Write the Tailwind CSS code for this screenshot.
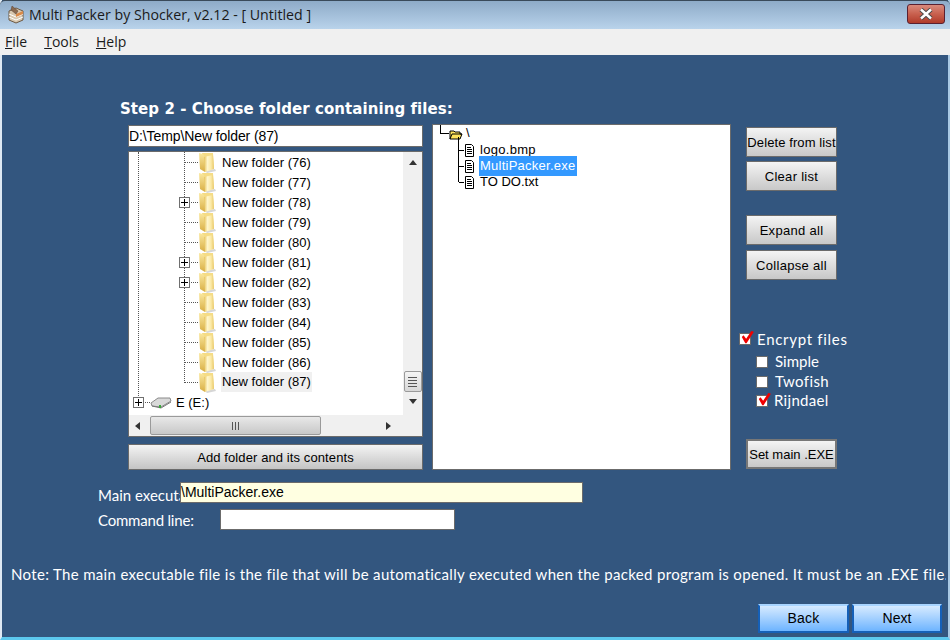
<!DOCTYPE html>
<html lang="en">
<head>
  <meta charset="UTF-8">
  <title>Multi Packer by Shocker</title>
  <script src="https://cdn.jsdelivr.net/npm/@tailwindcss/browser@4"></script>
</head>
<body class="w-[950px] h-[640px] overflow-hidden bg-[#33567f] font-['Liberation_Sans',sans-serif] text-[13px] text-black">
<svg class="absolute w-0 h-0" width="0" height="0">
  <defs>
    <linearGradient id="fold" x1="0" y1="0" x2="1" y2="0"><stop offset="0" stop-color="#e6c25a"/><stop offset="0.35" stop-color="#fff6cc"/><stop offset="0.7" stop-color="#fbe9a6"/><stop offset="1" stop-color="#e8c868"/></linearGradient>
    <linearGradient id="back" x1="0" y1="0" x2="0" y2="1"><stop offset="0" stop-color="#fbe9a0"/><stop offset="1" stop-color="#d8ae44"/></linearGradient>
    <symbol id="folder" viewBox="0 0 18 21">
      <path d="M7 19 L17 17 L18 19 L9 21 Z" fill="#d6d6d6"/>
      <path d="M4 1 L15 1 L16 16 L6 18 Z" fill="#f5dc86"/>
      <path d="M1 1 L5 2 L7 5 L7 20 L2 17 Z" fill="url(#back)"/>
      <path d="M6 5 L15 3 L16 17 L7 20 Z" fill="url(#fold)"/>
    </symbol>
    <symbol id="plus" viewBox="0 0 11 11">
      <rect x="0.5" y="0.5" width="10" height="10" fill="#fff" stroke="#6f6f6f"/>
      <path d="M2 5.5 H9 M5.5 2 V9" stroke="#000"/>
    </symbol>
    <symbol id="file" viewBox="0 0 11 13">
      <path d="M1.5 0.5 H7.5 L9.5 2.5 V12.5 H1.5 Z" fill="#fff" stroke="#000"/>
      <path d="M3 3.5 H7 M3 5.5 H8 M3 7.5 H8 M3 9.5 H8" stroke="#000"/>
    </symbol>
    <symbol id="check" viewBox="0 0 16 15">
      <path d="M2 7 L4 5 L7 9 L13 0 L16 1 L7.5 14 L6 14 Z" fill="#f00000"/>
    </symbol>
  </defs>
</svg>

<div class="relative w-[950px] h-[640px] flex flex-col border-l-2 border-r-2 border-b-[3px] border-l-[#dfe9f3] border-r-[#a9c9e4] border-b-[#5cc8ee]">
  <!-- title bar -->
  <div class="-mx-[2px] h-[29px] shrink-0 flex items-center pl-[7px] bg-gradient-to-b from-[#8eabc8] to-[#b9d3eb] border-t border-t-[#3a4a5a] rounded-t-[5px]">
    <svg width="18" height="20" viewBox="0 0 18 20" class="shrink-0">
      <path d="M9 3 L16 6 L16 15 L9 18 L2 15 L2 6 Z" fill="#d8c8b0" stroke="#6d5a45"/>
      <path d="M2 9 L9 12 L16 9 M2 12 L9 15 L16 12" stroke="#fff" fill="none"/>
      <path d="M9 12 L16 9 L16 6 L9 9 Z" fill="#d98a4a"/>
      <path d="M5 1 L11 6 L9 9 L4 5 Z" fill="#8a6a50" stroke="#5a4030" stroke-width="0.5"/>
    </svg>
    <span class="ml-[4px] text-[14.2px] text-[#1a1a1a] font-['Open_Sans',sans-serif] whitespace-nowrap">Multi Packer by Shocker, v2.12 - [ Untitled ]</span>
    <div class="ml-auto mr-[5px] mb-[3px] w-[38px] h-[20px] rounded-[3px] border border-[#5a2030] bg-gradient-to-b from-[#d98a7c] via-[#c8604e] to-[#b03a2a] flex items-center justify-center">
      <svg width="14" height="12" viewBox="0 0 14 12"><path d="M2 1.5 L12 10.5 M12 1.5 L2 10.5" stroke="#4a4a4a" stroke-width="4.5"/><path d="M2 1.5 L12 10.5 M12 1.5 L2 10.5" stroke="#fff" stroke-width="2.5"/></svg>
    </div>
  </div>
  <!-- menu -->
  <div class="-mx-[2px] h-[26px] pb-[2px] shrink-0 bg-[#f0f0f0] flex items-center pl-[5px] gap-[17px] text-[14px] text-[#1a1a1a] font-['Open_Sans',sans-serif]">
    <span><u>F</u>ile</span><span><u>T</u>ools</span><span><u>H</u>elp</span>
  </div>

  <!-- step content -->
  <div class="flex-1 flex flex-col pl-[126px] relative">
    <h1 class="mt-[42px] -ml-[8px] h-[24px] leading-[24px] text-[15px] font-bold text-white tracking-[0.07px] font-['DejaVu_Sans',sans-serif] whitespace-nowrap">Step 2 - Choose folder containing files:</h1>
    <div class="mt-[3px] flex items-start">
      <!-- left column -->
      <div class="w-[295px] mt-[1px] flex flex-col">
        <div class="h-[22px] bg-white border border-[#6b6b6b] flex items-center text-[14px] tracking-[-0.1px]">D:\Temp\New folder (87)</div>
        <div class="relative mt-[4px] h-[286px] bg-white border border-[#6b6b6b] flex">
          <div class="relative flex-1 flex flex-col">
            <div class="relative flex-1 overflow-hidden">
              <div class="absolute left-[9px] top-0 h-[246px] border-l border-dotted border-l-[#555]"></div>
              <div class="absolute left-[55px] top-0 h-[231px] border-l border-dotted border-l-[#555]"></div>
              <div class="flex flex-col">
                <div class="relative h-5 flex items-center pl-[56px]"><span class="w-[13px] border-t border-dotted border-t-[#555]"></span><svg width="18" height="21" class="shrink-0"><use href="#folder"/></svg><span class="ml-[5px] px-[1px] pt-[1px]">New folder (76)</span></div>
                <div class="relative h-5 flex items-center pl-[56px]"><span class="w-[13px] border-t border-dotted border-t-[#555]"></span><svg width="18" height="21" class="shrink-0"><use href="#folder"/></svg><span class="ml-[5px] px-[1px] pt-[1px]">New folder (77)</span></div>
                <div class="relative h-5 flex items-center pl-[56px]"><span class="w-[13px] border-t border-dotted border-t-[#555]"></span><svg width="11" height="11" class="absolute left-[50px] top-[5px]"><use href="#plus"/></svg><svg width="18" height="21" class="shrink-0"><use href="#folder"/></svg><span class="ml-[5px] px-[1px] pt-[1px]">New folder (78)</span></div>
                <div class="relative h-5 flex items-center pl-[56px]"><span class="w-[13px] border-t border-dotted border-t-[#555]"></span><svg width="18" height="21" class="shrink-0"><use href="#folder"/></svg><span class="ml-[5px] px-[1px] pt-[1px]">New folder (79)</span></div>
                <div class="relative h-5 flex items-center pl-[56px]"><span class="w-[13px] border-t border-dotted border-t-[#555]"></span><svg width="18" height="21" class="shrink-0"><use href="#folder"/></svg><span class="ml-[5px] px-[1px] pt-[1px]">New folder (80)</span></div>
                <div class="relative h-5 flex items-center pl-[56px]"><span class="w-[13px] border-t border-dotted border-t-[#555]"></span><svg width="11" height="11" class="absolute left-[50px] top-[5px]"><use href="#plus"/></svg><svg width="18" height="21" class="shrink-0"><use href="#folder"/></svg><span class="ml-[5px] px-[1px] pt-[1px]">New folder (81)</span></div>
                <div class="relative h-5 flex items-center pl-[56px]"><span class="w-[13px] border-t border-dotted border-t-[#555]"></span><svg width="11" height="11" class="absolute left-[50px] top-[5px]"><use href="#plus"/></svg><svg width="18" height="21" class="shrink-0"><use href="#folder"/></svg><span class="ml-[5px] px-[1px] pt-[1px]">New folder (82)</span></div>
                <div class="relative h-5 flex items-center pl-[56px]"><span class="w-[13px] border-t border-dotted border-t-[#555]"></span><svg width="18" height="21" class="shrink-0"><use href="#folder"/></svg><span class="ml-[5px] px-[1px] pt-[1px]">New folder (83)</span></div>
                <div class="relative h-5 flex items-center pl-[56px]"><span class="w-[13px] border-t border-dotted border-t-[#555]"></span><svg width="18" height="21" class="shrink-0"><use href="#folder"/></svg><span class="ml-[5px] px-[1px] pt-[1px]">New folder (84)</span></div>
                <div class="relative h-5 flex items-center pl-[56px]"><span class="w-[13px] border-t border-dotted border-t-[#555]"></span><svg width="18" height="21" class="shrink-0"><use href="#folder"/></svg><span class="ml-[5px] px-[1px] pt-[1px]">New folder (85)</span></div>
                <div class="relative h-5 flex items-center pl-[56px]"><span class="w-[13px] border-t border-dotted border-t-[#555]"></span><svg width="18" height="21" class="shrink-0"><use href="#folder"/></svg><span class="ml-[5px] px-[1px] pt-[1px]">New folder (86)</span></div>
                <div class="relative h-5 flex items-center pl-[56px]"><span class="w-[13px] border-t border-dotted border-t-[#555]"></span><svg width="18" height="21" class="shrink-0"><use href="#folder"/></svg><span class="ml-[5px] px-[1px] h-5 leading-5 bg-[#f0f0f0]">New folder (87)</span></div>
                <div class="relative h-5 flex items-center pl-[10px]"><svg width="11" height="11" class="absolute left-[4px] top-[5px]"><use href="#plus"/></svg><span class="w-[11px] border-t border-dotted border-t-[#555]"></span>
                  <svg width="22" height="14" viewBox="0 0 22 14" class="shrink-0"><path d="M1 8 L8 3 L20 3 L21 6 L11 12 L2 11 Z" fill="#d9d9d9" stroke="#8a8a8a"/><path d="M2 11 L11 13 L21 7" stroke="#777" fill="none"/><rect x="9" y="10" width="2" height="3" fill="#3aa83a"/></svg>
                  <span class="ml-[4px] pt-[1px]">E (E:)</span></div>
              </div>
            </div>
            <!-- horizontal scrollbar -->
            <div class="h-[21px] shrink-0 bg-[#f0f0f0] flex items-center pl-[6px]">
              <span class="w-0 h-0 border-y-[4px] border-y-transparent border-r-[5px] border-r-[#333]"></span>
              <div class="ml-[10px] w-[171px] h-[19px] rounded-[2px] border border-[#9a9a9a] bg-gradient-to-b from-[#e8e8e8] to-[#c8c8c8] flex items-center justify-center gap-[2px]">
                <span class="w-px h-[8px] bg-[#555]"></span><span class="w-px h-[8px] bg-[#555]"></span><span class="w-px h-[8px] bg-[#555]"></span>
              </div>
              <span class="ml-[65px] w-0 h-0 border-y-[4px] border-y-transparent border-l-[5px] border-l-[#333]"></span>
            </div>
          </div>
          <!-- vertical scrollbar -->
          <div class="w-[19px] shrink-0 bg-[#f0f0f0] flex flex-col items-center">
            <span class="mt-[8px] w-0 h-0 border-x-[4px] border-x-transparent border-b-[5px] border-b-[#333]"></span>
            <div class="mt-[206px] w-[18px] h-[21px] rounded-[2px] border border-[#9a9a9a] bg-gradient-to-b from-[#f4f4f4] to-[#d8d8d8] flex flex-col items-center justify-center gap-[2px]">
              <span class="h-px w-[9px] bg-[#555]"></span><span class="h-px w-[9px] bg-[#555]"></span><span class="h-px w-[9px] bg-[#555]"></span><span class="h-px w-[9px] bg-[#555]"></span>
            </div>
            <span class="mt-[7px] w-0 h-0 border-x-[4px] border-x-transparent border-t-[5px] border-t-[#333]"></span>
          </div>
        </div>
        <button class="mt-[7px] h-[26px] pt-[1px] border border-[#6b6b6b] bg-gradient-to-b from-[#f4f4f4] to-[#c4c4c4] text-[13px] tracking-[0.1px]">Add folder and its contents</button>
      </div>

      <!-- file list -->
      <div class="relative ml-[9px] w-[299px] h-[346px] bg-white border border-[#6b6b6b]">
        <div class="absolute left-[7px] top-0 w-[9px] h-[9px] border-l border-b border-black"></div>
        <div class="absolute left-[25px] top-[12px] w-px h-[45px] bg-black"></div>
        <div class="flex items-center pl-[16px] pt-[1px] h-[13px] mt-[2px]">
          <svg width="14" height="11" viewBox="0 0 14 11" class="shrink-0"><path d="M1 2 L5 2 L6 3 L11 3 L11 5 L13 5 L11 10 L1 10 Z" fill="#ffe45c" stroke="#000"/><path d="M1 10 L3 5 L13 5" stroke="#000" fill="none"/></svg>
          <span class="ml-[3px] -mt-[2px]">\</span>
        </div>
        <div class="mt-[2px] flex flex-col">
          <div class="flex items-center h-[16px] pl-[26px]"><span class="w-[5px] h-px bg-black"></span><svg width="11" height="13" class="shrink-0"><use href="#file"/></svg><span class="ml-[4px] px-[1px] tracking-[0.3px]">logo.bmp</span></div>
          <div class="flex items-center h-[16px] pl-[26px]"><span class="w-[5px] h-px bg-black"></span><svg width="11" height="13" class="shrink-0"><use href="#file"/></svg><span class="ml-[4px] px-[1px] bg-[#3399ff] text-white tracking-[0.25px]">MultiPacker.exe</span></div>
          <div class="flex items-center h-[16px] pl-[26px]"><span class="w-[5px] h-px bg-black"></span><svg width="11" height="13" class="shrink-0"><use href="#file"/></svg><span class="ml-[4px] px-[1px]">TO DO.txt</span></div>
        </div>
      </div>

      <!-- right column -->
      <div class="ml-[15px] w-[91px] flex flex-col pt-[3px]">
        <button class="h-[30px] pt-[1px] border border-[#6b6b6b] bg-gradient-to-b from-[#f4f4f4] to-[#c8c8c8] whitespace-nowrap tracking-[0.1px]">Delete from list</button>
        <button class="mt-[4px] h-[30px] pt-[1px] border border-[#6b6b6b] bg-gradient-to-b from-[#f4f4f4] to-[#c8c8c8] tracking-[0.3px]">Clear list</button>
        <button class="mt-[24px] h-[30px] pt-[1px] border border-[#6b6b6b] bg-gradient-to-b from-[#f4f4f4] to-[#c8c8c8] tracking-[0.3px]">Expand all</button>
        <button class="mt-[5px] h-[30px] pt-[1px] border border-[#6b6b6b] bg-gradient-to-b from-[#f4f4f4] to-[#c8c8c8] tracking-[0.3px]">Collapse all</button>
        <div class="mt-[49px] -ml-[7px] h-[20px] flex items-center gap-[6px] text-white text-[15px] tracking-[0.7px] font-['Lato',sans-serif] whitespace-nowrap">
          <span class="relative w-[12px] h-[12px] bg-white border border-[#6b6b6b] shrink-0"><svg width="14" height="13" class="absolute -top-[3px] left-0"><use href="#check"/></svg></span>Encrypt files
        </div>
        <div class="mt-[3px] ml-[10px] flex flex-col gap-[1px] text-white text-[15px] font-['Lato',sans-serif]">
          <div class="h-[19px] flex items-center gap-[7px]"><span class="w-[12px] h-[12px] bg-white border border-[#6b6b6b] shrink-0"></span>Simple</div>
          <div class="h-[19px] flex items-center gap-[7px] tracking-[0.4px]"><span class="w-[12px] h-[12px] bg-white border border-[#6b6b6b] shrink-0"></span>Twofish</div>
          <div class="h-[19px] -mt-[1px] flex items-center gap-[6px] tracking-[0.3px]"><span class="relative w-[12px] h-[12px] bg-white border border-[#6b6b6b] shrink-0"><svg width="14" height="13" class="absolute -top-[3px] left-0"><use href="#check"/></svg></span>Rijndael</div>
        </div>
        <button class="mt-[29px] h-[30px] pt-[1px] border-2 border-[#777] bg-gradient-to-b from-[#f4f4f4] to-[#c8c8c8] whitespace-nowrap">Set main .EXE</button>
      </div>
    </div>

    <!-- main exe / command line -->
    <div class="mt-[12px] -ml-[30px] flex h-[21px] items-center relative">
      <span class="w-[82px] pt-[6px] overflow-hidden whitespace-nowrap text-[15px] text-white font-['Lato',sans-serif]">Main executable file:</span>
      <div class="w-[403px] h-[21px] bg-[#ffffe1] border border-[#6b6b6b] flex items-center text-[14px]">\MultiPacker.exe</div>
    </div>
    <div class="mt-[6px] -ml-[30px] flex h-[21px] items-center">
      <span class="w-[122px] pt-[1px] whitespace-nowrap text-[15px] tracking-[-0.2px] text-white font-['Lato',sans-serif]">Command line:</span>
      <div class="w-[235px] h-[21px] bg-white border border-[#6b6b6b]"></div>
    </div>

    <!-- note -->
    <div class="mt-[34px] -ml-[117px] w-[935px] overflow-hidden whitespace-nowrap h-[20px] leading-[20px] text-[15px] text-white font-['Lato',sans-serif] tracking-[0.33px]">Note: The main executable file is the file that will be automatically executed when the packed program is opened. It must be an .EXE file.</div>

    <!-- nav -->
    <div class="mt-[20px] mr-[6px] flex justify-end gap-[3px]">
      <button class="w-[91px] h-[29px] border-2 border-[#1560b8] border-t-[#a8d4ff] bg-gradient-to-b from-[#d6eaff] to-[#6db4ff] text-[14px] tracking-[0.2px]">Back</button>
      <button class="w-[90px] h-[29px] border-2 border-[#1560b8] border-t-[#a8d4ff] bg-gradient-to-b from-[#d6eaff] to-[#6db4ff] text-[14px]">Next</button>
    </div>
  </div>
</div>
</body>
</html>
